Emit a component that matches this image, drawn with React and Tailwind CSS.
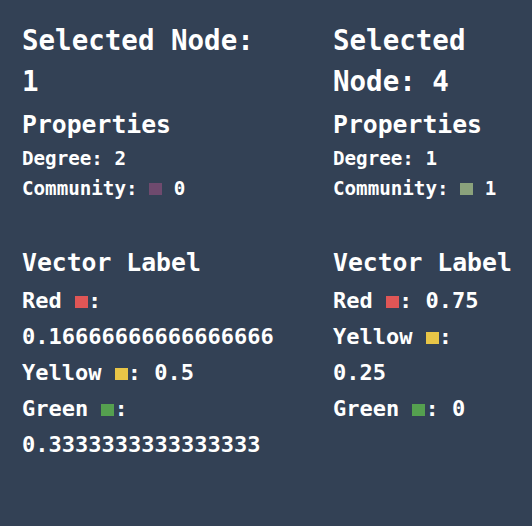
const nodes = [
  {
    id: 1,
    degree: 2,
    community: 0,
    communityColor: 'bg-[#6f4a6e]',
    vector: { red: '0.16666666666666666', yellow: '0.5', green: '0.3333333333333333' },
  },
  {
    id: 4,
    degree: 1,
    community: 1,
    communityColor: 'bg-[#8ba27c]',
    vector: { red: '0.75', yellow: '0.25', green: '0' },
  },
]

function Swatch({ className }) {
  return <span className={`inline-block h-[12px] w-[13px] ${className}`} />
}

function NodePanel({ node, className }) {
  return (
    <div className={className}>
      <h2 className="text-[27.5px] leading-[40.5px] font-bold">
        Selected Node: {node.id}
      </h2>
      <h3 className="mt-[6px] mb-[1px] text-[24.75px] leading-[36px] font-bold">Properties</h3>
      <p className="text-[19.2px] leading-[30px]">Degree: {node.degree}</p>
      <p className="text-[19.2px] leading-[30px]">
        Community: <Swatch className={`h-[11px] w-[12px] ${node.communityColor}`} /> {node.community}
      </p>
      <h3 className="mt-[41px] text-[24.75px] leading-[36px] font-bold">Vector Label</h3>
      <div className="mt-[2px] text-[22px] leading-[36px]">
        <p>
          Red <Swatch className="bg-[#e05656]" />: {node.vector.red}
        </p>
        <p>
          Yellow <Swatch className="bg-[#e8c547]" />: {node.vector.yellow}
        </p>
        <p>
          Green <Swatch className="bg-[#55a04f]" />: {node.vector.green}
        </p>
      </div>
    </div>
  )
}

export default function App() {
  return (
    <div className="flex h-[526px] w-[532px] bg-[#334155] pt-[20px] font-['DejaVu_Sans_Mono',monospace] font-bold text-white">
      <NodePanel node={nodes[0]} className="w-[311px] shrink-0 pl-[22px] pr-[44px]" />
      <NodePanel node={nodes[1]} className="min-w-0 flex-1 pl-[22px] pr-[17px]" />
    </div>
  )
}
